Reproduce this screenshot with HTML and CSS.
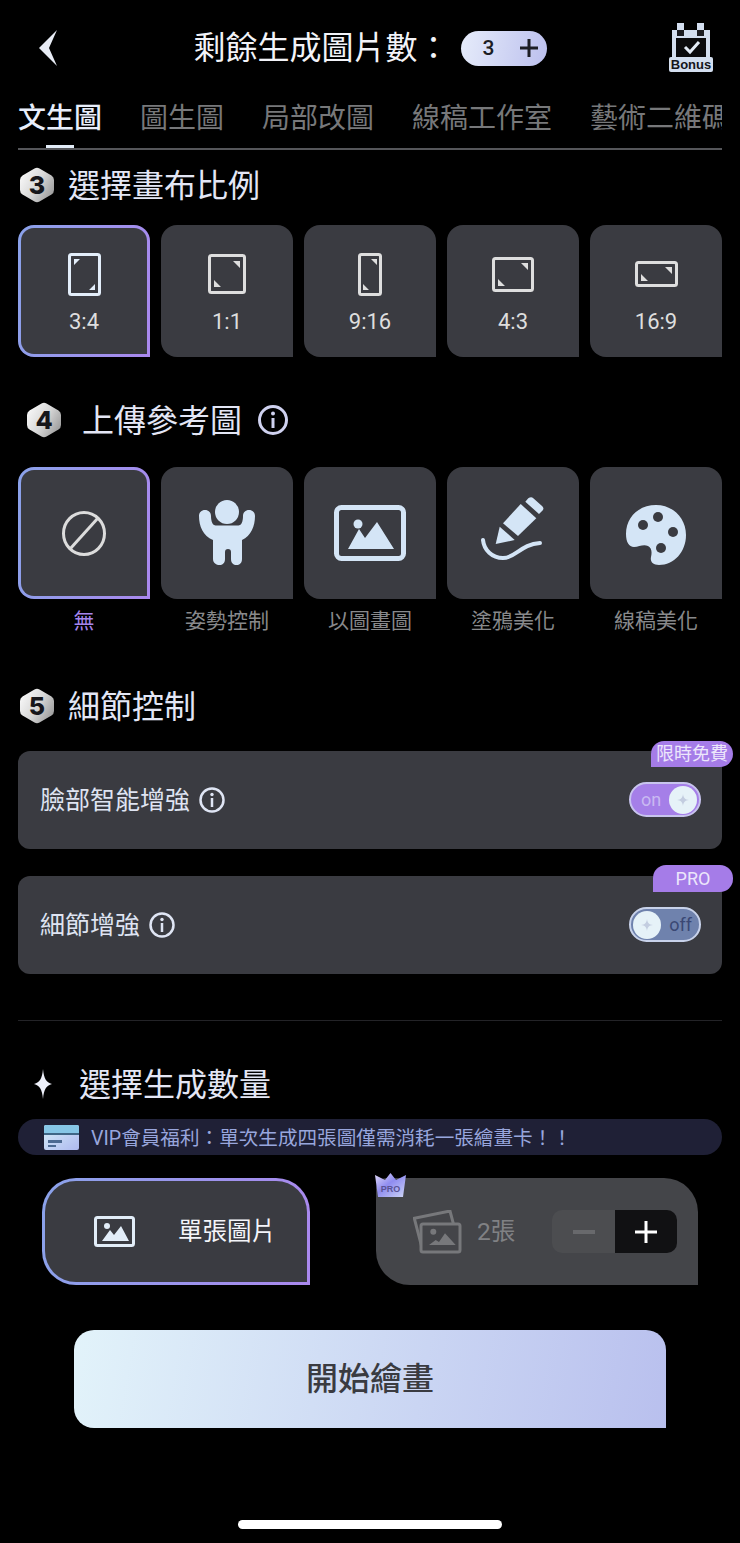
FILE: index.html
```html
<!DOCTYPE html>
<html lang="zh-Hant">
<head>
    <meta charset="UTF-8">
    <meta name="viewport" content="width=device-width, initial-scale=1.0">
    <title>文生圖</title>
    <link rel="stylesheet" href="styles.css">
</head>
<body>
    <div class="app-container">
        <!-- top bar -->
        <div class="topbar">
            <svg class="back-icon" width="18" height="36" viewBox="0 0 18 36"><polygon points="18,0 0,18 18,36 10,18"/></svg>
            <div class="topbar-title">
                <span>剩餘生成圖片數：</span>
                <div class="count-pill">
                    <span>3</span>
                    <svg width="20" height="20" viewBox="0 0 20 20"><path d="M10 1v18M1 10h18" stroke="#1d1e24" stroke-width="3"/></svg>
                </div>
            </div>
            <svg class="bonus-icon" width="44" height="50" viewBox="0 0 44 50">
                <path d="M3 8h38v30H3z" fill="#d3deef"/>
                <path d="M8 1h7v7H8zM28 1h7v7h-7z" fill="#d3deef"/>
                <path d="M8 8h7v6H8zM28 8h7v6h-7z" fill="#1c1d22"/>
                <rect x="7" y="16" width="30" height="19" fill="#0b0b0d"/>
                <path d="M16 25l5 5 9-10" fill="none" stroke="#e4ecf7" stroke-width="3"/>
                <rect x="0" y="35" width="44" height="15" rx="2" fill="#d3deef"/>
                <text x="22" y="47" class="bonus-text" text-anchor="middle">Bonus</text>
            </svg>
        </div>

        <!-- tabs -->
        <div class="tabs">
            <div class="tab active">文生圖</div>
            <div class="tab">圖生圖</div>
            <div class="tab">局部改圖</div>
            <div class="tab">線稿工作室</div>
            <div class="tab">藝術二維碼</div>
        </div>

        <!-- step 3 -->
        <div class="section-head step-3">
            <div class="hex"><span>3</span></div>
            <span>選擇畫布比例</span>
        </div>
        <div class="card-row ratio-row">
            <div class="card selected">
                <div class="card-icon">
                    <svg width="33" height="43" viewBox="0 0 33 43"><rect x="1.5" y="1.5" width="30" height="40" rx="2" fill="none" stroke="#e3eefa" stroke-width="3"/><path d="M6 6h6l-6 6zM27 37h-6l6-6z" fill="#e3eefa"/></svg>
                </div>
                <div class="card-label">3:4</div>
            </div>
            <div class="card">
                <div class="card-icon">
                    <svg width="38" height="40" viewBox="0 0 38 40"><rect x="1.5" y="1.5" width="35" height="37" rx="2" fill="none" stroke="#dedede" stroke-width="3"/><path d="M32 7v7l-7-7zM6 33v-7l7 7z" fill="#dedede"/></svg>
                </div>
                <div class="card-label">1:1</div>
            </div>
            <div class="card">
                <div class="card-icon">
                    <svg width="24" height="43" viewBox="0 0 24 43"><rect x="1.5" y="1.5" width="21" height="40" rx="2" fill="none" stroke="#dedede" stroke-width="3"/><path d="M19 6v6l-6-6zM5 37v-6l6 6z" fill="#dedede"/></svg>
                </div>
                <div class="card-label">9:16</div>
            </div>
            <div class="card">
                <div class="card-icon">
                    <svg width="42" height="35" viewBox="0 0 42 35"><rect x="1.5" y="1.5" width="39" height="32" rx="2" fill="none" stroke="#dedede" stroke-width="3"/><path d="M36 6v7l-7-7zM6 29v-7l7 7z" fill="#dedede"/></svg>
                </div>
                <div class="card-label">4:3</div>
            </div>
            <div class="card">
                <div class="card-icon">
                    <svg width="43" height="26" viewBox="0 0 43 26"><rect x="1.5" y="1.5" width="40" height="23" rx="2" fill="none" stroke="#dedede" stroke-width="3"/><path d="M37 6v7l-7-7zM6 20v-7l7 7z" fill="#dedede"/></svg>
                </div>
                <div class="card-label">16:9</div>
            </div>
        </div>

        <!-- step 4 -->
        <div class="section-head step-4">
            <div class="hex"><span>4</span></div>
            <span>上傳參考圖</span>
            <svg class="info-large" width="30" height="30" viewBox="0 0 30 30"><circle cx="15" cy="15" r="13.5" fill="none" stroke="#cfd1ef" stroke-width="3"/><circle cx="15" cy="8.5" r="2" fill="#cfd1ef"/><path d="M15 13v10" stroke="#cfd1ef" stroke-width="3"/></svg>
        </div>
        <div class="card-row upload-row">
            <div class="upload-item">
                <div class="card selected icon-only">
                    <svg width="44" height="45" viewBox="0 0 44 45"><ellipse cx="22" cy="22.5" rx="20.5" ry="21" fill="none" stroke="#dcdcdc" stroke-width="3"/><path d="M36 7L8 38" stroke="#dcdcdc" stroke-width="3"/></svg>
                </div>
                <div class="upload-label current">無</div>
            </div>
            <div class="upload-item">
                <div class="card icon-only">
                    <svg width="56" height="66" viewBox="0 0 56 66"><circle cx="28" cy="12" r="12" fill="#d4e5f6"/><path d="M6 10c3.500 0 6 2.500 6 6 0 4 1 8 3 9 1 .5 2 .5 3 .5h20c1 0 2 0 3-.5 2-1 3-5 3-9 0-3.500 2.500-6 6-6s6 2.500 6 6c0 10-4 20-13 24v19c0 4-2.500 6-5.500 6s-5.500-2-5.500-6V52c0-2-1-3-3-3s-3 1-3 3v7c0 4-2.500 6-5.500 6S14 63 14 59V40C4 36 0 26 0 16c0-3.500 2.500-6 6-6z" fill="#d4e5f6"/></svg>
                </div>
                <div class="upload-label">姿勢控制</div>
            </div>
            <div class="upload-item">
                <div class="card icon-only">
                    <svg width="72" height="56" viewBox="0 0 72 56"><rect x="2.500" y="2.500" width="67" height="51" rx="5" fill="none" stroke="#d4e5f6" stroke-width="5"/><circle cx="24" cy="19" r="4.500" fill="#d4e5f6"/><path d="M14 44l11-20 6 9 12-16 17 27z" fill="#d4e5f6"/></svg>
                </div>
                <div class="upload-label">以圖畫圖</div>
            </div>
            <div class="upload-item">
                <div class="card icon-only">
                    <svg class="pen-icon" width="64" height="64" viewBox="0 0 64 64"><path d="M18.700 30.700L14.700 48l19-4z" fill="#d4e5f6"/><path d="M22 27.300L39.700 8 55.300 22.300 37 40z" fill="#d4e5f6"/><path d="M44.300 5.700l3-3.500q3-2 5 0l9 8q2 2 .5 4l-3.800 3.800z" fill="#d4e5f6"/><path d="M2 44c1 10 9 18 20 18 13 0 18-14 37-15" fill="none" stroke="#d4e5f6" stroke-width="4" stroke-linecap="round"/></svg>
                </div>
                <div class="upload-label">塗鴉美化</div>
            </div>
            <div class="upload-item">
                <div class="card icon-only">
                    <svg class="palette-icon" width="60" height="60" viewBox="0 0 60 60"><path d="M30 0C47 0 60 13 60 30S48 60 33 60c-6 0-9-3-8-8 1-4 1-9-3-11-5-2-9 1-14 1C3 42 0 37 0 29 0 12 13 0 30 0z" fill="#d4e5f6"/><circle cx="17" cy="20" r="5" fill="#3a3b41"/><circle cx="32" cy="12" r="5" fill="#3a3b41"/><circle cx="47" cy="27" r="5" fill="#3a3b41"/><circle cx="35" cy="43" r="5" fill="#3a3b41"/></svg>
                </div>
                <div class="upload-label">線稿美化</div>
            </div>
        </div>

        <!-- step 5 -->
        <div class="section-head step-5">
            <div class="hex"><span>5</span></div>
            <span>細節控制</span>
        </div>
        <div class="detail-row first">
            <span>臉部智能增強</span>
            <svg width="26" height="26" viewBox="0 0 26 26"><circle cx="13" cy="13" r="11.500" fill="none" stroke="#dfe5f4" stroke-width="2.500"/><circle cx="13" cy="7.500" r="1.700" fill="#dfe5f4"/><path d="M13 11v9" stroke="#dfe5f4" stroke-width="2.500"/></svg>
            <div class="toggle on">
                <span>on</span>
                <div class="knob">
                    <svg width="12" height="12" viewBox="0 0 12 12"><path d="M6 0C6.500 4 8 5.500 12 6 8 6.500 6.500 8 6 12 5.500 8 4 6.500 0 6 4 5.500 5.500 4 6 0z" fill="#c3cde0"/></svg>
                </div>
            </div>
            <div class="badge">限時免費</div>
        </div>
        <div class="detail-row">
            <span>細節增強</span>
            <svg width="26" height="26" viewBox="0 0 26 26"><circle cx="13" cy="13" r="11.500" fill="none" stroke="#dfe5f4" stroke-width="2.500"/><circle cx="13" cy="7.500" r="1.700" fill="#dfe5f4"/><path d="M13 11v9" stroke="#dfe5f4" stroke-width="2.500"/></svg>
            <div class="toggle off">
                <div class="knob">
                    <svg width="12" height="12" viewBox="0 0 12 12"><path d="M6 0C6.500 4 8 5.500 12 6 8 6.500 6.500 8 6 12 5.500 8 4 6.500 0 6 4 5.500 5.500 4 6 0z" fill="#c3cde0"/></svg>
                </div>
                <span>off</span>
            </div>
            <div class="badge pro">PRO</div>
        </div>

        <div class="divider"></div>

        <!-- quantity -->
        <div class="section-head step-count">
            <svg width="20" height="30" viewBox="0 0 20 30"><path d="M10 0C11 10 13 13 19 15 13 17 11 20 10 30 9 20 7 17 1 15 7 13 9 10 10 0z" fill="#eef0fa"/></svg>
            <span>選擇生成數量</span>
        </div>
        <div class="vip-bar">
            <svg width="35" height="25" viewBox="0 0 35 25">
                <defs><linearGradient id="vipCard" x1="0" y1="0" x2="1" y2="1"><stop offset="0" stop-color="#d6eef8"/><stop offset="1" stop-color="#aeb9ef"/></linearGradient></defs>
                <rect width="35" height="25" rx="2" fill="url(#vipCard)"/>
                <path d="M2 0h31q2 0 2 2v6H0V2q0-2 2-2z" fill="#86c6e6"/>
                <rect y="8" width="35" height="2" fill="#3f6686"/>
                <path d="M4 15h14v3H4zM4 20h8v2H4z" fill="#4d6a92"/>
            </svg>
            <span>VIP會員福利：單次生成四張圖僅需消耗一張繪畫卡！！</span>
        </div>
        <div class="quantity-row">
            <div class="qty-single">
                <svg width="41" height="31" viewBox="0 0 41 31"><rect x="1.500" y="1.500" width="38" height="28" rx="2" fill="none" stroke="#e2edf8" stroke-width="3"/><circle cx="13" cy="10" r="3" fill="#e2edf8"/><path d="M8 25l8-11 4 5 7-9 8 15z" fill="#e2edf8"/></svg>
                <span>單張圖片</span>
            </div>
            <div class="qty-multi">
                <svg class="crown" width="31" height="25" viewBox="0 0 31 25">
                    <defs><linearGradient id="crownFill" x1="0" y1="0" x2="1" y2="1"><stop offset="0" stop-color="#e4dcf8"/><stop offset="0.45" stop-color="#8f8cf0"/><stop offset="1" stop-color="#cfd6f6"/></linearGradient></defs>
                    <path d="M0 2l10 5 5.500-7L21 7l10-5-3 22H3z" fill="url(#crownFill)"/>
                    <text x="15.500" y="19" class="crown-text" text-anchor="middle">PRO</text>
                </svg>
                <svg width="49" height="44" viewBox="0 0 49 44">
                    <path d="M8.700 36.700L1.300 8.300 37 1l3.300 12.300" fill="none" stroke="#77787b" stroke-width="3"/>
                    <rect x="8" y="14" width="39" height="28" rx="2" fill="#444549" stroke="#77787b" stroke-width="3"/>
                    <circle cx="20.300" cy="21.700" r="3" fill="#77787b"/>
                    <path d="M16 35l6.700-5 3.300 2 6-8.700L42.700 35z" fill="#77787b"/>
                </svg>
                <span class="qty-text">2張</span>
                <div class="stepper">
                    <div class="step-minus"><svg width="22" height="4" viewBox="0 0 22 4"><rect width="22" height="4" fill="#68696c"/></svg></div>
                    <div class="step-plus"><svg width="24" height="24" viewBox="0 0 24 24"><path d="M12 1v22M1 12h22" stroke="#fff" stroke-width="3"/></svg></div>
                </div>
            </div>
        </div>

        <div class="start-button">開始繪畫</div>
        <div class="home-bar"></div>
    </div>
</body>
</html>
```

FILE: styles.css
```css
body {
    margin: 0;
    padding: 0;
    font-family: Roboto, "Noto Sans CJK TC", sans-serif;
    background-color: #000;
    color: #e3e6f5;
}

.app-container {
    width: 740px;
    height: 1543px;
    overflow: hidden;
    display: flex;
    flex-direction: column;
    box-sizing: border-box;
    padding: 0 18px;
}

/* top bar */
.topbar {
    height: 96px;
    margin: 0 9px;
    display: grid;
    grid-template-columns: 1fr auto 1fr;
    align-items: center;
    flex-shrink: 0;
}

.back-icon {
    margin-left: 12px;
    fill: #e8ecf5;
}

.topbar-title {
    display: flex;
    align-items: center;
    font-size: 32px;
    line-height: 40px;
    color: #f2f3f8;
}

.count-pill {
    width: 86px;
    height: 35px;
    margin-left: 11px;
    border-radius: 18px;
    background: linear-gradient(100deg, #e6ecfa, #bcc0ee);
    display: flex;
    align-items: center;
    justify-content: space-between;
    box-sizing: border-box;
    padding: 0 8px 0 22px;
    color: #1d1e24;
    font-size: 21px;
    font-weight: 500;
}

.bonus-icon {
    justify-self: end;
    margin-top: -2px;
}

.bonus-text {
    font-family: "Liberation Sans", sans-serif;
    font-size: 13px;
    font-weight: bold;
    fill: #14151a;
}

/* tabs */
.tabs {
    height: 54px;
    display: flex;
    gap: 38px;
    overflow: hidden;
    border-bottom: 2px solid #55565a;
    box-sizing: border-box;
    flex-shrink: 0;
}

.tab {
    position: relative;
    flex-shrink: 0;
    font-size: 28px;
    line-height: 46px;
    white-space: nowrap;
    color: #77787a;
}

.tab.active {
    color: #e8eefb;
    font-weight: 500;
}

.tab.active::after {
    content: "";
    position: absolute;
    left: 28px;
    bottom: 0;
    width: 28px;
    height: 3px;
    background-color: #e3edf8;
}

/* section headings */
.section-head {
    display: flex;
    align-items: center;
    gap: 14px;
    height: 36px;
    font-size: 32px;
    flex-shrink: 0;
}

.section-head > span {
    margin-bottom: 4px;
}

.hex {
    width: 34px;
    height: 36px;
    margin-left: 2px;
    flex-shrink: 0;
    display: flex;
    align-items: center;
    justify-content: center;
    clip-path: path("M14.500 1.500Q17 0 19.500 1.500L31.500 8.500Q34 10 34 13V23Q34 26 31.500 27.500L19.500 34.500Q17 36 14.500 34.500L2.500 27.500Q0 26 0 23V13Q0 10 2.500 8.500Z");
    background: linear-gradient(120deg, #ffffff, #d8d8d8 50%, #8c8c8c);
    color: #16161a;
    font-family: Inter, sans-serif;
    font-size: 25px;
    font-weight: 800;
}

.step-3 { margin-top: 17px; }

.step-4 {
    margin-top: 45px;
    margin-left: 7px;
    gap: 21px;
}

.info-large { margin-left: -5px; }

.step-5 { margin-top: 52px; }

.step-count {
    margin-top: 45px;
    margin-left: 15px;
    gap: 26px;
}

/* cards */
.card-row {
    display: flex;
    gap: 11px;
    flex-shrink: 0;
}

.ratio-row { margin-top: 22px; }
.upload-row { margin-top: 29px; }

.card {
    width: 132px;
    height: 132px;
    box-sizing: border-box;
    border: 3px solid transparent;
    border-radius: 16px 16px 0 16px;
    background-color: #3a3b41;
    background-clip: border-box;
    display: flex;
    flex-direction: column;
    align-items: center;
    padding-top: 24px;
}

.card.selected {
    background: linear-gradient(#3a3b41, #3a3b41) padding-box, linear-gradient(100deg, #8aa2ea, #aa88ee) border-box;
}

.card.icon-only {
    justify-content: center;
    padding-top: 0;
}

.pen-icon { margin-bottom: 10px; }
.palette-icon { margin-top: 3px; }

.card-icon {
    height: 44px;
    display: flex;
    align-items: center;
    justify-content: center;
}

.card-label {
    margin-top: 11px;
    font-size: 22px;
    line-height: 30px;
    color: #dedede;
}

.upload-item {
    display: flex;
    flex-direction: column;
    align-items: center;
}

.upload-label {
    margin-top: 7px;
    font-size: 21px;
    line-height: 30px;
    color: #88898b;
}

.upload-label.current {
    color: #a585ee;
}

/* detail rows */
.detail-row {
    position: relative;
    height: 98px;
    margin-top: 27px;
    padding: 0 21px 1px 22px;
    box-sizing: border-box;
    border-radius: 12px;
    background-color: #3a3b41;
    display: flex;
    align-items: center;
    gap: 9px;
    font-size: 25px;
    color: #dfe4f2;
    flex-shrink: 0;
}

.detail-row > span {
    margin-bottom: 3px;
}

.toggle {
    width: 72px;
    height: 35px;
    margin-left: auto;
    box-sizing: border-box;
    border: 2px solid #c8c4ee;
    border-radius: 18px;
    display: flex;
    align-items: center;
    justify-content: space-between;
    padding: 0 2px;
    font-size: 18px;
}

.toggle.on {
    background-color: #a57fe8;
    color: #c9b9f2;
    padding-left: 10px;
}

.toggle.off {
    background-color: #6f82ad;
    color: #3b4874;
    border-color: #c8d2ea;
    padding-right: 7px;
}

.knob {
    width: 28px;
    height: 28px;
    border-radius: 50%;
    background-color: #e6f2f8;
    display: flex;
    align-items: center;
    justify-content: center;
}

.badge {
    position: absolute;
    top: -10px;
    right: -11px;
    width: 82px;
    height: 26px;
    border-radius: 13px 13px 13px 0;
    background-color: #a57ce8;
    color: #ece6fb;
    font-size: 18px;
    line-height: 26px;
    text-align: center;
}

.badge.pro {
    top: -11px;
    width: 80px;
    height: 27px;
    line-height: 27px;
}

.divider {
    height: 1px;
    margin-top: 46px;
    background-color: #232327;
    flex-shrink: 0;
}

/* quantity */
.vip-bar {
    height: 36px;
    margin-top: 17px;
    padding-left: 26px;
    border-radius: 18px;
    background-color: #1f2036;
    display: flex;
    align-items: center;
    gap: 12px;
    font-size: 19.600px;
    color: #98a6dd;
    flex-shrink: 0;
}

.vip-bar > span {
    margin-bottom: 2px;
}

.quantity-row {
    height: 107px;
    margin: 23px 24px 0;
    display: flex;
    justify-content: space-between;
    flex-shrink: 0;
}

.qty-single {
    width: 268px;
    box-sizing: border-box;
    border: 3px solid transparent;
    border-radius: 34px 34px 0 34px;
    background: linear-gradient(#3a3b41, #3a3b41) padding-box, linear-gradient(100deg, #8aa2ea, #aa88ee) border-box;
    padding-left: 49px;
    display: flex;
    align-items: center;
    gap: 43px;
    font-size: 24.500px;
    color: #f4f5fa;
}

.qty-single > span {
    margin-bottom: 4px;
}

.qty-multi {
    position: relative;
    width: 322px;
    box-sizing: border-box;
    border-radius: 10px 34px 0 34px;
    background-color: #444549;
    padding: 0 21px 0 37px;
    display: flex;
    align-items: center;
    gap: 15px;
}

.crown {
    position: absolute;
    top: -5px;
    left: -1px;
}

.crown-text {
    font-family: "Liberation Sans", sans-serif;
    font-size: 9px;
    font-weight: bold;
    fill: #5a5396;
}

.qty-text {
    font-size: 24.500px;
    color: #808184;
    margin-bottom: 4px;
}

.stepper {
    width: 125px;
    height: 43px;
    margin-left: auto;
    border-radius: 10px;
    overflow: hidden;
    display: flex;
}

.step-minus,
.step-plus {
    display: flex;
    align-items: center;
    justify-content: center;
}

.step-minus {
    width: 63px;
    background-color: #4c4d50;
}

.step-plus {
    width: 62px;
    background-color: #111113;
}

.start-button {
    height: 98px;
    margin: 45px 56px 0;
    border-radius: 20px 20px 0 20px;
    background: linear-gradient(100deg, #e2f3fa, #b9c0ee);
    color: #3a3b41;
    font-size: 32px;
    font-weight: 500;
    line-height: 98px;
    text-align: center;
    flex-shrink: 0;
}

.home-bar {
    width: 264px;
    height: 9px;
    margin: 92px auto 0;
    border-radius: 5px;
    background-color: #fff;
    flex-shrink: 0;
}
```
